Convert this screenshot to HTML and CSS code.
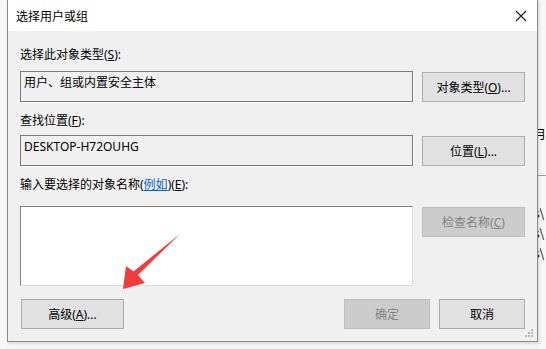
FILE: index.html
```html
<!DOCTYPE html>
<html lang="zh-CN">

<head>
  <meta charset="UTF-8">
  <title>选择用户或组</title>
  <link rel="stylesheet" href="styles.css">
</head>

<body>
  <div class="desk">
    <div class="deskLeft"></div>
    <div class="dialog">
      <div class="titleBar">
        <span class="titleText">选择用户或组</span>
        <svg class="closeIcon" width="12" height="12" viewBox="0 0 12 12">
          <path d="M1 1 L11 11 M11 1 L1 11" stroke="#1a1a1a" stroke-width="1.1" fill="none" />
        </svg>
      </div>
      <div class="content">
        <div class="label label1">选择此对象类型(<u>S</u>):</div>
        <div class="row row1">
          <div class="readBox">用户、组或内置安全主体</div>
          <button class="btn sideBtn">对象类型(<u>O</u>)...</button>
        </div>
        <div class="label label2">查找位置(<u>F</u>):</div>
        <div class="row row2">
          <div class="readBox">DESKTOP-H72OUHG</div>
          <button class="btn sideBtn">位置(<u>L</u>)...</button>
        </div>
        <div class="label label3">输入要选择的对象名称(<span class="link">例如</span>)(<u>E</u>):</div>
        <div class="row row3">
          <div class="nameBox"></div>
          <button class="btn sideBtn disabled">检查名称(<u>C</u>)</button>
        </div>
        <div class="footer">
          <button class="btn advBtn">高级(<u>A</u>)...</button>
          <div class="spacer"></div>
          <button class="btn okBtn disabled">确定</button>
          <button class="btn okBtn">取消</button>
        </div>
      </div>
      <svg class="grip" width="9" height="9" viewBox="0 0 9 9">
        <rect x="6" y="0" width="2" height="2" fill="#b8b8b8" />
        <rect x="3" y="3" width="2" height="2" fill="#b8b8b8" />
        <rect x="6" y="3" width="2" height="2" fill="#b8b8b8" />
        <rect x="0" y="6" width="2" height="2" fill="#b8b8b8" />
        <rect x="3" y="6" width="2" height="2" fill="#b8b8b8" />
        <rect x="6" y="6" width="2" height="2" fill="#b8b8b8" />
      </svg>
    </div>
    <div class="deskRight">
      <div class="peek peek1">月)</div>
      <div class="peekLine"></div>
      <div class="peek peek2">s\</div>
      <div class="peek peek3">s\</div>
      <div class="peek peek3">s\</div>
    </div>
  </div>
  <!-- red annotation arrow -->
  <svg class="arrow" width="546" height="349" viewBox="0 0 546 349">
    <path d="M180.5 233.5 L138 275 L145 283 L123 289 L126 266 L133.5 271.5 Z" fill="#f23b3b" />
  </svg>
</body>

</html>
```

FILE: styles.css
```css
body {
  margin: 0;
  width: 546px;
  height: 349px;
  overflow: hidden;
  background-color: #f4f4f4;
  font-family: "Noto Sans", "Noto Sans CJK SC", sans-serif;
  font-size: 12px;
  color: #000;
  position: relative;
}

.desk {
  display: flex;
  height: 349px;
}

.deskLeft {
  width: 7px;
  background-color: #f7f7f7;
}

.dialog {
  position: relative;
  width: 529px;
  height: 341px;
  border: 1px solid #8c8c8c;
  border-top: none;
  background-color: #f0f0f0;
  box-shadow: 1px 1px 3px rgba(0, 0, 0, 0.15);
}

.titleBar {
  height: 31px;
  background-color: #fff;
  display: flex;
  align-items: center;
  padding-left: 8px;
  padding-right: 10px;
}

.titleText {
  flex: 1;
  font-family: "Noto Sans CJK SC", sans-serif;
}

.closeIcon {
  margin-top: 1px;
}

.content {
  padding: 0 12px;
}

.label {
  height: 16px;
  line-height: 16px;
}

.label1 {
  margin-top: 16px;
}

.label2 {
  margin-top: 11px;
}

.label3 {
  margin-top: 11px;
}

.link {
  color: #0066cc;
  text-decoration: underline;
}

.row {
  display: flex;
  gap: 9px;
  align-items: flex-start;
}

.row1 {
  margin-top: 8px;
}

.row2 {
  margin-top: 6px;
}

.row3 {
  margin-top: 13px;
}

.readBox {
  width: 391px;
  height: 29px;
  border: 1px solid #7a7a7a;
  box-shadow: 1px 1px 0 #fff;
  padding-left: 3px;
  line-height: 22px;
  box-sizing: content-box;
  width: 388px;
}

.nameBox {
  width: 391px;
  height: 78px;
  background-color: #fff;
  border: 1px solid;
  border-color: #828282 #dadada #dadada #828282;
}

.btn {
  font-family: "Noto Sans", "Noto Sans CJK SC", sans-serif;
  font-size: 12px;
  color: #000;
  background-color: #e1e1e1;
  border: 1px solid #adadad;
  padding: 0;
  height: 30px;
}

.btn.disabled {
  background-color: #cccccc;
  border-color: #bfbfbf;
  color: #838383;
}

.sideBtn {
  width: 103px;
  margin-top: 1px;
}

.footer {
  display: flex;
  gap: 9px;
  margin-top: 13px;
  padding-left: 1px;
}

.spacer {
  flex: 1;
}

.advBtn {
  width: 103px;
}

.okBtn {
  width: 86px;
}

.grip {
  position: absolute;
  right: 3px;
  bottom: 3px;
}

.deskRight {
  flex: 1;
  overflow: hidden;
  background-color: #f7f7f7;
  white-space: nowrap;
  font-family: "Noto Sans CJK SC", sans-serif;
}

.peek {
  height: 16px;
  line-height: 16px;
  margin-left: -4px;
}

.peek1 {
  margin-top: 126px;
}

.peekLine {
  margin-top: 33px;
  border-top: 1px solid #a0a0a0;
}

.peek2 {
  margin-top: 29px;
}

.peek3 {
  margin-top: 4px;
}

.arrow {
  position: absolute;
  top: 0;
  left: 0;
  pointer-events: none;
}
```
